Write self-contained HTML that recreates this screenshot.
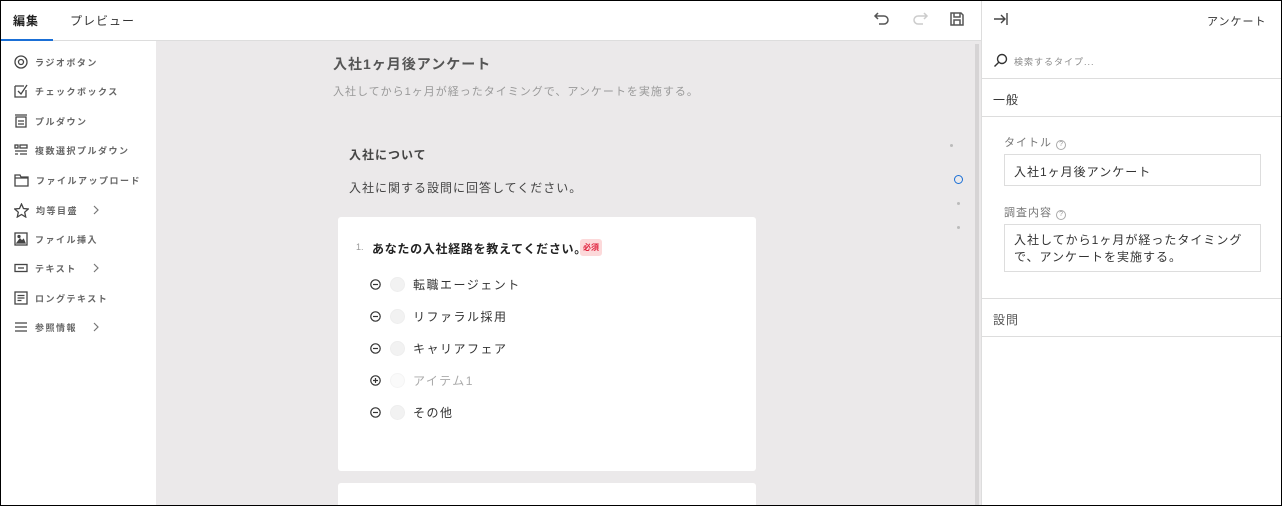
<!DOCTYPE html><html><head><meta charset="utf-8"><style>
*{box-sizing:border-box;margin:0;padding:0}
body{width:1282px;height:506px;overflow:hidden;font-family:"Liberation Sans","Noto Sans CJK JP",sans-serif;background:#fff;position:relative;color:#333}
.frame{position:absolute;inset:0;border:1px solid #000;z-index:10;pointer-events:none}
.abs{position:absolute}
.t{letter-spacing:1px}
.side div.it{position:absolute;left:14px;height:20px;display:flex;align-items:center;font-size:9px;color:#666;font-weight:bold;letter-spacing:1.5px}
.side svg{margin-right:7px}
.gt{position:absolute;left:92px}
.opt{position:absolute;left:370px;display:flex;align-items:center;font-size:12px;letter-spacing:1.5px;color:#333}
.opt .rd{width:15px;height:15px;border-radius:50%;background:#f2f2f2;border:1px solid #eee;margin:0 8px 0 9px}
</style></head><body>
<div class="frame"></div>
<div class="abs" style="left:0;top:0;width:982px;height:41px;border-bottom:1px solid #ddd;background:#fff"></div>
<div class="abs t" style="left:13px;top:12px;font-size:12px;font-weight:bold;color:#222">編集</div>
<div class="abs" style="left:1px;top:39px;width:52px;height:2px;background:#1a6fd6"></div>
<div class="abs t" style="left:70px;top:12px;font-size:12px;color:#333">プレビュー</div>
<svg class="abs" style="left:873px;top:11px" width="18" height="16" viewBox="0 0 18 16" fill="none" stroke="#555" stroke-width="1.5"><path d="M5 2 2 5l3 3M2 5h9a4 4 0 0 1 0 8H6"/></svg>
<svg class="abs" style="left:911px;top:11px" width="18" height="16" viewBox="0 0 18 16" fill="none" stroke="#ccc" stroke-width="1.5"><path d="M13 2l3 3-3 3M16 5H7a4 4 0 0 0 0 8h5"/></svg>
<svg class="abs" style="left:949px;top:11px" width="16" height="16" viewBox="0 0 16 16" fill="none" stroke="#555" stroke-width="1.5"><path d="M2 2h10l2 2v10H2z M5 2v4h6V2 M5 14v-5h6v5"/></svg>
<div class="side">
<div class="it" style="top:52px"><svg width="14" height="14" viewBox="0 0 14 14" fill="none" stroke="#444" stroke-width="1.3"><circle cx="7" cy="7" r="6"/><circle cx="7" cy="7" r="2.5"/></svg>ラジオボタン</div>
<div class="it" style="top:81px"><svg width="14" height="14" viewBox="0 0 14 14" fill="none" stroke="#444" stroke-width="1.3"><path d="M1 2h9M1 2v11h11V6M4 7l3 3 6-9"/></svg>チェックボックス</div>
<div class="it" style="top:111px"><svg width="14" height="14" viewBox="0 0 14 14" fill="none" stroke="#444" stroke-width="1.3"><path d="M1 1h12M2 3h10v10H2zM4 7h6M4 10h6"/></svg>プルダウン</div>
<div class="it" style="top:140px"><svg width="14" height="14" viewBox="0 0 14 14" fill="none" stroke="#444" stroke-width="1.3"><rect x="1" y="2" width="3" height="3"/><rect x="6" y="2" width="7" height="3"/><path d="M1 8h12M1 11h3M6 11h7"/></svg>複数選択プルダウン</div>
<div class="it" style="top:170px"><svg width="15" height="14" viewBox="0 0 15 14" fill="none" stroke="#444" stroke-width="1.3"><path d="M1 2h5l1 2h7v9H1zM1 5h13"/></svg>ファイルアップロード</div>
<div class="it" style="top:200px"><svg width="15" height="15" viewBox="0 0 15 15" fill="none" stroke="#444" stroke-width="1.3"><path d="M7.5 1l2 4.5 4.8.5-3.6 3.2 1 4.8-4.2-2.5-4.2 2.5 1-4.8L.7 6l4.8-.5z"/></svg>均等目盛</div>
<div class="it" style="top:229px"><svg width="14" height="14" viewBox="0 0 14 14" fill="none" stroke="#444" stroke-width="1.3"><rect x="1" y="1" width="12" height="12"/><path d="M3 11l3-4 2 2 1.5-1.5L11 11z" fill="#444"/><circle cx="5" cy="4.5" r="1" fill="#444"/></svg>ファイル挿入</div>
<div class="it" style="top:258px"><svg width="14" height="14" viewBox="0 0 14 14" fill="none" stroke="#444" stroke-width="1.3"><rect x="1" y="3.5" width="12" height="7"/><path d="M4 7h6"/></svg>テキスト</div>
<div class="it" style="top:288px"><svg width="14" height="14" viewBox="0 0 14 14" fill="none" stroke="#444" stroke-width="1.3"><rect x="1" y="1" width="12" height="12"/><path d="M3.5 4.5h7M3.5 7h7M3.5 9.5h4"/></svg>ロングテキスト</div>
<div class="it" style="top:317px"><svg width="14" height="14" viewBox="0 0 14 14" fill="none" stroke="#444" stroke-width="1.3"><path d="M1 3h12M1 7h12M1 11h12"/></svg>参照情報</div>
<svg class="gt" style="top:205px" width="8" height="10" viewBox="0 0 8 10" fill="none" stroke="#777" stroke-width="1.2"><path d="M2 1l4 4-4 4"/></svg>
<svg class="gt" style="top:263px" width="8" height="10" viewBox="0 0 8 10" fill="none" stroke="#777" stroke-width="1.2"><path d="M2 1l4 4-4 4"/></svg>
<svg class="gt" style="top:322px" width="8" height="10" viewBox="0 0 8 10" fill="none" stroke="#777" stroke-width="1.2"><path d="M2 1l4 4-4 4"/></svg>
</div>
<div class="abs" style="left:156px;top:41px;width:826px;height:465px;background:#ebe9ea"></div>
<div class="abs" style="left:975px;top:44px;width:4px;height:462px;background:#d6d4d5"></div>
<div class="abs t" style="left:333px;top:54px;font-size:14px;font-weight:bold;color:#555">入社1ヶ月後アンケート</div>
<div class="abs t" style="left:333px;top:83px;font-size:11px;color:#999">入社してから1ヶ月が経ったタイミングで、アンケートを実施する。</div>
<div class="abs t" style="left:349px;top:146px;font-size:12px;font-weight:bold;color:#444">入社について</div>
<div class="abs t" style="left:349px;top:179px;font-size:12px;color:#444">入社に関する設問に回答してください。</div>
<div class="abs" style="left:950px;top:144px;width:3px;height:3px;border-radius:50%;background:#bbb"></div>
<div class="abs" style="left:954px;top:175px;width:9px;height:9px;border-radius:50%;border:1.5px solid #1a6fd6"></div>
<div class="abs" style="left:957px;top:202px;width:3px;height:3px;border-radius:50%;background:#bbb"></div>
<div class="abs" style="left:957px;top:226px;width:3px;height:3px;border-radius:50%;background:#bbb"></div>
<div class="abs" style="left:338px;top:217px;width:418px;height:254px;background:#fff;border-radius:3px"></div>
<div class="abs" style="left:338px;top:483px;width:418px;height:30px;background:#fff;border-radius:3px"></div>
<div class="abs" style="left:356px;top:242px;font-size:9px;color:#999">1.</div>
<div class="abs" style="left:372px;top:240px;font-size:12px;font-weight:bold;color:#222;letter-spacing:0.7px;white-space:nowrap">あなたの入社経路を教えてください。</div>
<div class="abs" style="left:580px;top:239px;width:22px;height:17px;background:#fcd9da;border-radius:3px;color:#e0213d;font-size:8px;font-weight:bold;text-align:center;line-height:17px">必須</div>
<div class="opt" style="top:276px"><svg width="11" height="11" viewBox="0 0 11 11" fill="none" stroke="#333" stroke-width="1.2"><circle cx="5.5" cy="5.5" r="4.7"/><path d="M3 5.5h5"/></svg><span class="rd"></span>転職エージェント</div>
<div class="opt" style="top:308px"><svg width="11" height="11" viewBox="0 0 11 11" fill="none" stroke="#333" stroke-width="1.2"><circle cx="5.5" cy="5.5" r="4.7"/><path d="M3 5.5h5"/></svg><span class="rd"></span>リファラル採用</div>
<div class="opt" style="top:340px"><svg width="11" height="11" viewBox="0 0 11 11" fill="none" stroke="#333" stroke-width="1.2"><circle cx="5.5" cy="5.5" r="4.7"/><path d="M3 5.5h5"/></svg><span class="rd"></span>キャリアフェア</div>
<div class="opt" style="top:372px;color:#aaa"><svg width="11" height="11" viewBox="0 0 11 11" fill="none" stroke="#333" stroke-width="1.2"><circle cx="5.5" cy="5.5" r="4.7"/><path d="M3 5.5h5M5.5 3v5"/></svg><span class="rd" style="background:#fafafa;border-color:#f4f4f4"></span>アイテム1</div>
<div class="opt" style="top:404px"><svg width="11" height="11" viewBox="0 0 11 11" fill="none" stroke="#333" stroke-width="1.2"><circle cx="5.5" cy="5.5" r="4.7"/><path d="M3 5.5h5"/></svg><span class="rd"></span>その他</div>
<div class="abs" style="left:981px;top:0;width:1px;height:506px;background:#ddd"></div>
<svg class="abs" style="left:993px;top:12px" width="16" height="14" viewBox="0 0 16 14" fill="none" stroke="#444" stroke-width="1.4"><path d="M1 7h11M8 3l4 4-4 4M14 1v12"/></svg>
<div class="abs t" style="left:1207px;top:13px;font-size:11px;color:#333">アンケート</div>
<svg class="abs" style="left:993px;top:53px" width="15" height="15" viewBox="0 0 15 15" fill="none" stroke="#333" stroke-width="1.4"><circle cx="9" cy="6" r="4.5"/><path d="M5.8 9.2 1.5 13.5"/></svg>
<div class="abs t" style="left:1014px;top:55px;font-size:9px;color:#888">検索するタイプ...</div>
<div class="abs" style="left:982px;top:78px;width:300px;height:1px;background:#ddd"></div>
<div class="abs t" style="left:993px;top:91px;font-size:12px;color:#333">一般</div>
<div class="abs" style="left:982px;top:116px;width:300px;height:1px;background:#ddd"></div>
<div class="abs t" style="left:1004px;top:134px;font-size:11px;color:#777">タイトル <span style="display:inline-block;width:10px;height:10px;border:1px solid #aaa;border-radius:50%;font-size:7px;line-height:8px;text-align:center;color:#999;letter-spacing:0">?</span></div>
<div class="abs" style="left:1004px;top:154px;width:257px;height:32px;border:1px solid #ddd"></div>
<div class="abs t" style="left:1014px;top:163px;font-size:12px;color:#333">入社1ヶ月後アンケート</div>
<div class="abs t" style="left:1004px;top:204px;font-size:11px;color:#777">調査内容 <span style="display:inline-block;width:10px;height:10px;border:1px solid #aaa;border-radius:50%;font-size:7px;line-height:8px;text-align:center;color:#999;letter-spacing:0">?</span></div>
<div class="abs" style="left:1004px;top:224px;width:257px;height:48px;border:1px solid #ddd"></div>
<div class="abs t" style="left:1014px;top:232px;font-size:12px;color:#333;line-height:17px;width:240px">入社してから1ヶ月が経ったタイミング<br>で、アンケートを実施する。</div>
<div class="abs" style="left:982px;top:298px;width:300px;height:1px;background:#ddd"></div>
<div class="abs t" style="left:993px;top:311px;font-size:12px;color:#555">設問</div>
<div class="abs" style="left:982px;top:336px;width:300px;height:1px;background:#ddd"></div>
</body></html>
